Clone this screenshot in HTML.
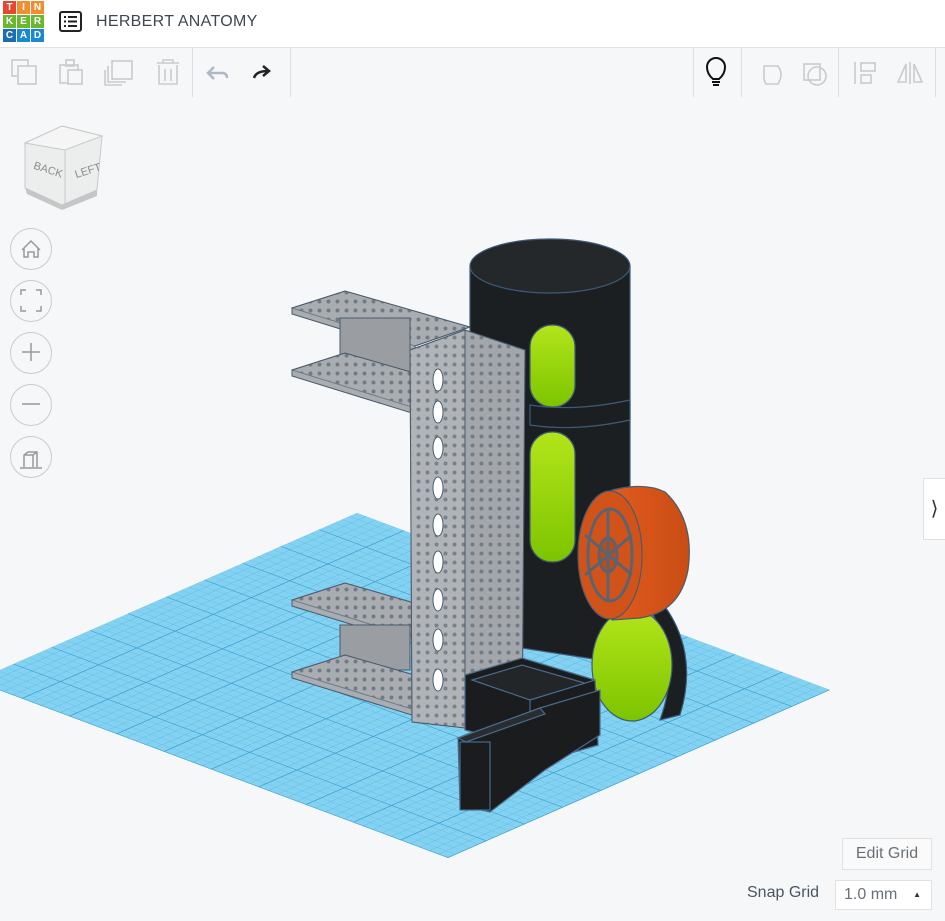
<!DOCTYPE html>
<html><head><meta charset="utf-8"><style>
*{margin:0;padding:0;box-sizing:border-box}
body{width:945px;height:921px;overflow:hidden;background:#f6f7f8;font-family:"Liberation Sans",sans-serif;position:relative}
.hdr{position:absolute;left:0;top:0;width:945px;height:48px;background:#fff;border-bottom:1px solid #e0e2e5}
.title{position:absolute;left:96px;top:13px;font-size:16px;color:#3d4852;letter-spacing:.3px}
.logo{position:absolute;left:3px;top:1px}
.logo div{position:absolute;width:13px;height:13px;color:#fff;font-size:10px;font-weight:bold;text-align:center;line-height:13px}
.btn{position:absolute;left:10px;width:42px;height:42px;border:1px solid #c9cbce;border-radius:50%;background:#f6f7f8}
.sep{position:absolute;top:48px;width:1px;height:49px;background:#dde0e3}
.edit{position:absolute;left:842px;top:838px;width:90px;height:32px;border:1px solid #dfe1e3;background:#fafafa;color:#6a7178;font-size:16px;text-align:center;line-height:30px}
.snapl{position:absolute;left:747px;top:884px;color:#4a5560;font-size:16px}
.snap{position:absolute;left:835px;top:880px;width:97px;height:30px;border:1px solid #dfe1e3;background:#fff;color:#6a7178;font-size:16px;padding-left:8px;line-height:28px}
.side{position:absolute;left:923px;top:478px;width:22px;height:62px;background:#fff;border:1px solid #dfe1e3;border-right:none;font-size:20px;color:#333;line-height:60px;text-align:center}
</style></head><body>
<svg width="945" height="921" style="position:absolute;left:0;top:0">
<defs>
<pattern id="g" width="2" height="2" patternUnits="userSpaceOnUse"><path d="M2 0V2H0" fill="none" stroke="#55b4de" stroke-width=".2"/></pattern>
<pattern id="G" width="10" height="10" patternUnits="userSpaceOnUse"><path d="M10 0V10H0" fill="none" stroke="#3a9fd0" stroke-width=".4"/></pattern>
<linearGradient id="gr" x1="0" x2="0" y1="0" y2="1"><stop offset="0" stop-color="#b3e51a"/><stop offset="1" stop-color="#7cc400"/></linearGradient>
<linearGradient id="or" x1="0" x2="1"><stop offset="0" stop-color="#e05a1e"/><stop offset="1" stop-color="#c94d14"/></linearGradient>
<pattern id="h" width="9" height="9" patternUnits="userSpaceOnUse"><circle cx="4.5" cy="4.5" r="2" fill="#4d5a66"/></pattern>
</defs>
<g transform="matrix(4.73 1.77 -3.82 1.68 357 513)">
<rect width="100" height="100" fill="#84d2f2"/><rect width="100" height="100" fill="url(#g)"/><rect width="100" height="100" fill="url(#G)"/>
</g>
<g stroke="#4a5b6c" stroke-width="1">
<polygon points="292,308 345,291 470,327 415,346 415,352 292,314" fill="#a9adb1"/>
<polygon points="292,308 345,291 470,327 415,346" fill="url(#h)" opacity=".6"/>
<rect x="340" y="318" width="70" height="55" fill="#9a9ea3"/>
<polygon points="292,370 345,353 470,389 415,408 415,414 292,376" fill="#a9adb1"/>
<polygon points="292,370 345,353 470,389 415,408" fill="url(#h)" opacity=".6"/>
<polygon points="292,600 345,583 470,619 415,638 415,644 292,606" fill="#a9adb1"/>
<polygon points="292,600 345,583 470,619 415,638" fill="url(#h)" opacity=".6"/>
<rect x="340" y="625" width="70" height="45" fill="#9a9ea3"/>
<polygon points="292,672 345,655 470,691 415,710 415,716 292,678" fill="#a9adb1"/>
<polygon points="292,672 345,655 470,691 415,710" fill="url(#h)" opacity=".6"/>
</g>
<g stroke="#3e5a78" stroke-width="1.2">
<path d="M470 266 V640 L600 660 L630 620 V266 Z" fill="#1c1f22"/>
<ellipse cx="550" cy="266" rx="80" ry="27" fill="#24282b"/>
<rect x="530" y="325" width="45" height="82" rx="22" fill="url(#gr)"/>
<rect x="530" y="432" width="45" height="130" rx="22" fill="url(#gr)"/>
<path d="M530 405 Q575 412 630 400 V420 Q575 432 530 425 Z" fill="#1c1f22"/>
</g>
<g stroke="#4a5b6c" stroke-width="1">
<polygon points="465,330 525,350 522,738 465,728" fill="#a3a7ab"/>
<polygon points="410,350 465,330 465,728 412,722" fill="#b0b4b8"/>
<polygon points="410,350 465,330 465,728 412,722" fill="url(#h)" opacity=".55"/>
<polygon points="465,330 525,350 522,738 465,728" fill="url(#h)" opacity=".55"/>
</g>
<g fill="#fff" stroke="#4a5b6c">
<ellipse cx="438" cy="380" rx="5" ry="11"/><ellipse cx="438" cy="412" rx="5" ry="11"/><ellipse cx="438" cy="448" rx="5" ry="11"/><ellipse cx="438" cy="488" rx="5" ry="11"/><ellipse cx="438" cy="525" rx="5" ry="11"/><ellipse cx="438" cy="562" rx="5" ry="11"/><ellipse cx="438" cy="600" rx="5" ry="11"/><ellipse cx="438" cy="640" rx="5" ry="11"/><ellipse cx="438" cy="680" rx="5" ry="11"/>
</g>
<g stroke="#3e5a78" stroke-width="1.2">
<path d="M660 600 Q700 650 680 715 L660 720 Q682 660 650 610 Z" fill="#1c1f22"/>
<ellipse cx="632" cy="665" rx="40" ry="56" fill="url(#gr)"/>
</g>
<g stroke="#4a5b6c" stroke-width="1.2">
<path d="M612 490 Q645 482 665 492 Q695 520 688 570 Q680 612 640 618 L612 620 Z" fill="url(#or)"/>
<ellipse cx="610" cy="555" rx="32" ry="64" fill="#d2531a"/>
<ellipse cx="610" cy="555" rx="22" ry="46" fill="none" stroke="#5a6470" stroke-width="3"/>
<ellipse cx="608" cy="555" rx="9" ry="17" fill="#c04a12" stroke="#5a6470" stroke-width="3"/>
<path d="M608 510V600M585 535L632 575M585 575L632 535" stroke="#5a6470" stroke-width="3"/>
</g>
<g stroke="#4a6a8a" stroke-width="1.2" fill="#1a1c1e">
<polygon points="465,675 522,658 595,680 595,735 525,745 465,730"/>
<polygon points="472,680 522,665 588,684 530,700" fill="#232629"/>
<polygon points="530,700 595,680 598,745 530,765"/>
<polygon points="458,738 540,708 600,690 600,735 545,770 490,812 460,805"/>
<polygon points="458,738 540,708 545,714 466,742" fill="#2a2d30"/>
<rect x="460" y="742" width="30" height="68" fill="#1a1c1e"/>
</g>
<polygon points="25,143 62,126 102,136 97,190 62,205 25,188" fill="#eceded" stroke="#c8c9ca"/>
<polygon points="25,143 62,126 102,136 65,150" fill="#f5f5f5" stroke="#c8c9ca"/>
<path d="M65 150V205" stroke="#c8c9ca"/>
<polygon points="25,188 62,205 97,190 97,196 62,210 27,194" fill="#c5c6c7"/>
<text x="33" y="172" font-size="11" fill="#8a8d90" transform="rotate(18 44 170)">BACK</text>
<text x="74" y="176" font-size="11" fill="#8a8d90" transform="rotate(-18 82 170)">LEFT</text>
</svg>
<div class="hdr"><div class="logo">
<div style="left:0;top:0;background:#e8472f">T</div><div style="left:14px;top:0;background:#f28d31">I</div><div style="left:28px;top:0;background:#f28d31">N</div>
<div style="left:0;top:14px;background:#6ab82e">K</div><div style="left:14px;top:14px;background:#6ab82e">E</div><div style="left:28px;top:14px;background:#6ab82e">R</div>
<div style="left:0;top:28px;background:#1a6fb4">C</div><div style="left:14px;top:28px;background:#1a8ad0">A</div><div style="left:28px;top:28px;background:#1a8ad0">D</div>
</div><div class="title">HERBERT ANATOMY</div></div>
<div class="sep" style="left:192px"></div><div class="sep" style="left:290px"></div><div class="sep" style="left:693px"></div><div class="sep" style="left:741px"></div><div class="sep" style="left:838px"></div><div class="sep" style="left:935px"></div>
<svg width="945" height="97" style="position:absolute;left:0;top:0">
<g fill="none" stroke="#c8cbcf" stroke-width="1.6">
<rect x="12" y="60" width="16" height="16"/><rect x="18" y="66" width="18" height="18" fill="#f6f7f8"/>
<rect x="60" y="65" width="18" height="18"/><rect x="66" y="60" width="8" height="6"/><rect x="68" y="70" width="14" height="14" fill="#f6f7f8"/>
<rect x="112" y="61" width="20" height="18"/><path d="M108 66v16h18M105 70v15h17"/>
<path d="M157 63h22M163 63v-3h10v3M159 65v19h18V65M165 69v12M171 69v12"/>
<path d="M208 73h14q5 0 5 5M214 67l-6 6 6 6" stroke="#aeb9c5" stroke-width="2.5"/>
<path d="M764 66h14q6 8 0 18h-12l-2-4z"/><rect x="804" y="64" width="16" height="16"/><circle cx="817" cy="76" r="9"/>
<path d="M855 62v22"/><rect x="861" y="63" width="14" height="8"/><rect x="861" y="75" width="10" height="8"/>
<path d="M910 62v22M906 64l-8 18h8zM914 64l8 18h-8z"/>
</g>
<path d="M254 78q2-7 14-7M263 66l6 5-6 5" fill="none" stroke="#222" stroke-width="2.5"/>
<g fill="none" stroke="#111" stroke-width="2"><path d="M713 79q-6-5-6-12a9 9 0 0 1 18 0q0 7-6 12z"/><path d="M712 82h8M713 85h6"/></g>
<rect x="60" y="12" width="21" height="19" rx="2" fill="none" stroke="#222" stroke-width="2"/>
<g stroke="#222" stroke-width="2"><path d="M64 17h2M68 17h9M64 21.5h2M68 21.5h9M64 26h2M68 26h9"/></g>
</svg>
<div class="btn" style="top:228px"></div><div class="btn" style="top:280px"></div><div class="btn" style="top:332px"></div><div class="btn" style="top:384px"></div><div class="btn" style="top:436px"></div>
<svg width="60" height="480" style="position:absolute;left:0;top:0" fill="none" stroke="#999" stroke-width="1.5">
<path d="M22 250l9-9 9 9M24 248v9h4v-5h6v5h4v-9"/>
<path d="M21 295v-5h5M36 290h5v5M41 306v5h-5M26 311h-5v-5"/>
<path d="M31 343v18M22 352h18"/><path d="M22 404h18"/>
<path d="M20 468h22M24 467v-12l4-3h9v15M24 455h9v12M33 455l4-3"/>
</svg>
<div class="side">&#10217;</div>
<div class="edit">Edit Grid</div>
<div class="snapl">Snap Grid</div>
<div class="snap">1.0 mm<span style="position:absolute;right:10px;font-size:8px;color:#333">&#9650;</span></div>
</body></html>
